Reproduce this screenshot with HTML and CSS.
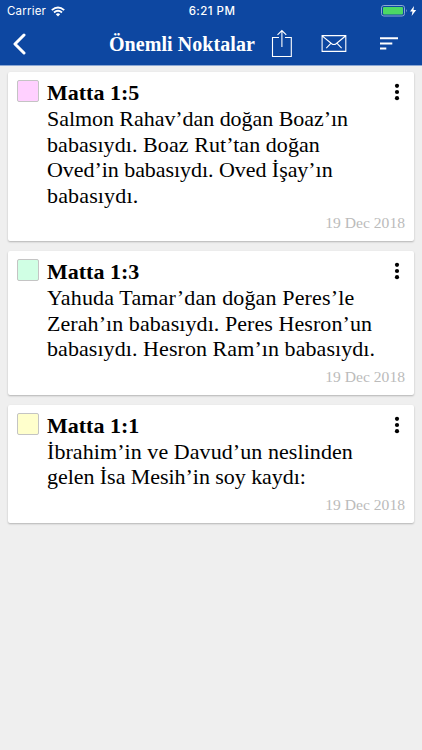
FILE: index.html
```
<!DOCTYPE html>
<html lang="tr">
<head>
<meta charset="utf-8">
<meta name="viewport" content="width=device-width">
<title>Önemli Noktalar</title>
<link rel="stylesheet" href="styles.css">
</head>
<body>
<header class="header">
  <div class="status">
    <div class="carrier">Carrier
      <svg width="14" height="11" viewBox="0 0 14 11" fill="none" stroke="#fff" stroke-width="1.9"><path d="M.8 4.1Q7-1.3 13.2 4.1M3 6.5Q7 3.1 11 6.5"/><path d="M4.8 8.2Q7 6.5 9.2 8.2L7 10.6z" fill="#fff" stroke="none"/></svg>
    </div>
    <div class="clock">6:21 PM</div>
    <div class="power">
      <svg width="36" height="12" viewBox="0 0 36 12"><rect x=".5" y=".5" width="23" height="10.5" rx="2.3" fill="none" stroke="#8aa9d3"/><rect x="2" y="2" width="20" height="7.5" rx="1" fill="#4cd964"/><path d="M25 4q1.6 1.7 0 3.6z" fill="#8aa9d3"/><path d="M33 1l-4 5.4h2.5L30.600 11l4.600-5.900h-2.700z" fill="#fff"/></svg>
    </div>
  </div>
  <div class="bar">
    <svg class="back" width="14" height="22" viewBox="0 0 14 22" fill="none" stroke="#fff" stroke-width="3" stroke-linecap="round" stroke-linejoin="round"><path d="M12 2L3 11l9 9"/></svg>
    <h1 class="heading">Önemli Noktalar</h1>
    <svg class="share" width="22" height="30" viewBox="0 0 22 30" fill="none" stroke="#fff" stroke-width="1.1"><path d="M8 8.500H1.500v19h18.800v-19H14M10.900 18V1.700M6.500 5.900l4.400-4.300 4.400 4.300"/></svg>
    <svg class="mail" width="26" height="18" viewBox="0 0 26 18" fill="none" stroke="#fff" stroke-width="1.1"><path d="M1.100 .6h23.700v15.800H1.100zM1.100 .8l9.600 7.900q2.200 1.700 4.400 0l9.700-7.900M5.300 13.100l4.500-4.700M20.600 13.100l-4.500-4.700"/></svg>
    <svg class="sort" width="20" height="14" viewBox="0 0 20 14" fill="#fff"><path d="M1 .3h18v2H1zM1 5.500h12.300v2H1zM1 10.500h6.300v2H1z"/></svg>
  </div>
</header>
<main class="list">
  <article class="card">
    <div class="swatch pink"></div>
    <div class="body"><h2>Matta 1:5</h2>
      <p><span class="line tight">Salmon Rahav’dan doğan Boaz’ın</span> <span class="line">babasıydı. Boaz Rut’tan doğan</span> <span class="line tight">Oved’in babasıydı. Oved İşay’ın</span> <span class="line wide">babasıydı.</span></p>
    </div>
    <svg class="more" width="6" height="18" viewBox="0 0 6 18"><circle cx="3" cy="2.800" r="2.100"/><circle cx="3" cy="9" r="2.100"/><circle cx="3" cy="15.200" r="2.100"/></svg>
    <time>19 Dec 2018</time>
  </article>
  <article class="card">
    <div class="swatch mint"></div>
    <div class="body"><h2>Matta 1:3</h2>
      <p><span class="line wide">Yahuda Tamar’dan doğan Peres’le</span> <span class="line">Zerah’ın babasıydı. Peres Hesron’un</span> <span class="line">babasıydı. Hesron Ram’ın babasıydı.</span></p>
    </div>
    <svg class="more" width="6" height="18" viewBox="0 0 6 18"><circle cx="3" cy="2.800" r="2.100"/><circle cx="3" cy="9" r="2.100"/><circle cx="3" cy="15.200" r="2.100"/></svg>
    <time>19 Dec 2018</time>
  </article>
  <article class="card">
    <div class="swatch yellow"></div>
    <div class="body"><h2>Matta 1:1</h2>
      <p><span class="line">İbrahim’in ve Davud’un neslinden</span> <span class="line tight">gelen İsa Mesih’in soy kaydı:</span></p>
    </div>
    <svg class="more" width="6" height="18" viewBox="0 0 6 18"><circle cx="3" cy="2.800" r="2.100"/><circle cx="3" cy="9" r="2.100"/><circle cx="3" cy="15.200" r="2.100"/></svg>
    <time>19 Dec 2018</time>
  </article>
</main>
</body>
</html>
```
FILE: styles.css
```
* { box-sizing: border-box; }
body { margin: 0; min-height: 750px; background: #efefef; font-family: "Liberation Serif", serif; color: #000; }
h1, h2, p { margin: 0; }
svg { display: block; }
.header { height: 66px; background: #0d47a1; border-bottom: 1px solid #8ba7d3; color: #fff; }
.status { height: 22px; display: grid; grid-template-columns: 1fr auto 1fr; align-items: center; padding: 0 5px 0 7px; font: 11.500px/22px Inter, sans-serif; }
.carrier { display: flex; align-items: center; gap: 5px; letter-spacing: .2px; }
.clock { font-weight: 500; letter-spacing: .45px; }
.power { justify-self: end; }
.bar { height: 43px; display: flex; align-items: center; padding-left: 12px; }
.heading { margin-left: 83px; width: 146px; font-size: 20px; line-height: 26px; letter-spacing: .06px; white-space: nowrap; }
.share { margin-left: 16px; }
.mail { margin-left: 28px; }
.sort { margin-left: 32px; }
.list { display: flex; flex-direction: column; gap: 10px; padding: 6px 8px; }
.card { display: grid; grid-template-columns: 30px 1fr 6px; padding: 8px 14px 7px 9px; background: #fff; border-radius: 2px; box-shadow: 0 1px 2px rgba(0,0,0,.25); }
.swatch { width: 22px; height: 22px; border: 1px solid #c4c4c4; border-radius: 2px; }
.pink { background: #ffd0ff; }
.mint { background: #d0ffe4; }
.yellow { background: #ffffcc; }
.body h2 { font-size: 22px; line-height: 26px; }
.body p { font-size: 22px; line-height: 25.500px; }
.line { display: block; white-space: nowrap; letter-spacing: .07px; }
.tight { letter-spacing: -.05px; }
.wide { letter-spacing: .15px; }
.more { margin-top: 3px; }
time { grid-column: 1 / -1; justify-self: end; margin: 5px -5px 1px 0; font-size: 15.600px; line-height: 20px; color: #bbb; }
```
